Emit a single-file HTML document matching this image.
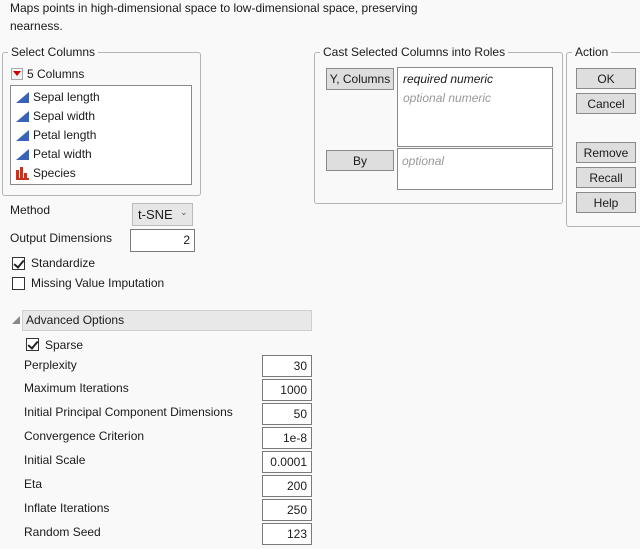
<!DOCTYPE html>
<html><head><style>
*{box-sizing:border-box;margin:0;padding:0}
body{width:640px;height:549px;background:#f9f9f9;font-family:"Liberation Sans",sans-serif;font-size:12px;color:#1a1a1a;position:relative;overflow:hidden}
.a{position:absolute;white-space:nowrap;line-height:14px}
.grp{position:absolute;border:1px solid #b4b4b4;border-radius:3px}
.gt{position:absolute;background:#f9f9f9;padding:0 3px;line-height:14px;top:-8px;left:5px}
.btn{position:absolute;background:#dedede;border:1px solid #8a8a8a;text-align:center;line-height:20px}
.box{position:absolute;background:#fff;border:1px solid #8a8a8a}
.inp{position:absolute;background:#fff;border:1px solid #7a7a7a;text-align:right;padding-right:4px;line-height:20px;height:22px}
.cb{position:absolute;width:13px;height:13px;border:1px solid #333;background:#fff}
.ck::after{content:"";position:absolute;left:3px;top:0px;width:4px;height:8px;border:solid #222;border-width:0 2px 2px 0;transform:rotate(40deg)}
.tri{position:absolute;width:0;height:0;border-left:13px solid transparent;border-bottom:11px solid #3a63b8}
.it{position:absolute;left:5px;line-height:14px}
.it .tri{left:0;top:2px}
.it span{position:absolute;left:17px;top:0}
.gray{color:#999;font-style:italic}
</style></head><body>
<div class="a" style="left:10px;top:1px">Maps points in high-dimensional space to low-dimensional space, preserving</div>
<div class="a" style="left:10px;top:19px">nearness.</div>

<div class="grp" style="left:2px;top:52px;width:199px;height:144px"><div class="gt">Select Columns</div></div>
<div style="position:absolute;left:11px;top:68px;width:12px;height:12px;border:1px solid #aaa;background:#f4f4f4"></div>
<div style="position:absolute;left:13px;top:71px;width:0;height:0;border-left:4px solid transparent;border-right:4px solid transparent;border-top:5px solid #c00"></div>
<div class="a" style="left:27px;top:67px">5 Columns</div>
<div class="box" style="left:10px;top:85px;width:182px;height:100px">
 <div class="it" style="top:4px;width:170px"><div class="tri"></div><span>Sepal length</span></div>
 <div class="it" style="top:23px;width:170px"><div class="tri"></div><span>Sepal width</span></div>
 <div class="it" style="top:42px;width:170px"><div class="tri"></div><span>Petal length</span></div>
 <div class="it" style="top:61px;width:170px"><div class="tri"></div><span>Petal width</span></div>
 <div class="it" style="top:80px;width:170px">
  <div style="position:absolute;left:0;top:4px;width:3px;height:9px;background:#c8321e"></div>
  <div style="position:absolute;left:4px;top:1px;width:3px;height:12px;background:#c8321e"></div>
  <div style="position:absolute;left:8px;top:7px;width:3px;height:6px;background:#c8321e"></div>
  <div style="position:absolute;left:0;top:12px;width:13px;height:2px;background:#c8321e"></div>
  <span>Species</span></div>
</div>

<div class="grp" style="left:314px;top:52px;width:249px;height:152px"><div class="gt">Cast Selected Columns into Roles</div></div>
<div class="btn" style="left:326px;top:68px;width:68px;height:22px">Y, Columns</div>
<div class="box" style="left:397px;top:67px;width:156px;height:80px">
 <div class="a" style="left:5px;top:4px;font-style:italic">required numeric</div>
 <div class="a gray" style="left:5px;top:23px">optional numeric</div>
</div>
<div class="btn" style="left:326px;top:150px;width:68px;height:21px">By</div>
<div class="box" style="left:397px;top:148px;width:156px;height:42px">
 <div class="a gray" style="left:4px;top:5px">optional</div>
</div>

<div class="grp" style="left:566px;top:52px;width:80px;height:175px"><div class="gt">Action</div></div>
<div class="btn" style="left:576px;top:68px;width:60px;height:21px">OK</div>
<div class="btn" style="left:576px;top:93px;width:60px;height:21px">Cancel</div>
<div class="btn" style="left:576px;top:142px;width:60px;height:21px">Remove</div>
<div class="btn" style="left:576px;top:167px;width:60px;height:21px">Recall</div>
<div class="btn" style="left:576px;top:192px;width:60px;height:21px">Help</div>

<div class="a" style="left:10px;top:203px">Method</div>
<div style="position:absolute;left:132px;top:203px;width:61px;height:23px;background:#e6e6e6;border:1px solid #bbb;line-height:21px;padding-left:5px;font-size:13px">t-SNE <span style="position:absolute;left:47px;top:-2px;font-size:9px;color:#555">&#8964;</span></div>
<div class="a" style="left:10px;top:231px">Output Dimensions</div>
<div class="inp" style="left:130px;top:229px;width:65px;height:23px">2</div>

<div class="cb ck" style="left:12px;top:257px"></div>
<div class="a" style="left:31px;top:256px">Standardize</div>
<div class="cb" style="left:12px;top:277px"></div>
<div class="a" style="left:31px;top:276px">Missing Value Imputation</div>

<div style="position:absolute;left:12px;top:316px;width:0;height:0;border-left:8px solid transparent;border-bottom:8px solid #888"></div>
<div style="position:absolute;left:22px;top:310px;width:290px;height:21px;background:#e8e8e8;border:1px solid #d0d0d0;line-height:19px;padding-left:3px">Advanced Options</div>

<div class="cb ck" style="left:26px;top:338px"></div>
<div class="a" style="left:45px;top:338px">Sparse</div>

<div class="a" style="left:24px;top:358px">Perplexity</div><div class="inp" style="left:262px;top:355px;width:50px">30</div>
<div class="a" style="left:24px;top:381px">Maximum Iterations</div><div class="inp" style="left:262px;top:379px;width:50px">1000</div>
<div class="a" style="left:24px;top:405px">Initial Principal Component Dimensions</div><div class="inp" style="left:262px;top:403px;width:50px">50</div>
<div class="a" style="left:24px;top:429px">Convergence Criterion</div><div class="inp" style="left:262px;top:427px;width:50px">1e-8</div>
<div class="a" style="left:24px;top:453px">Initial Scale</div><div class="inp" style="left:262px;top:451px;width:50px">0.0001</div>
<div class="a" style="left:24px;top:477px">Eta</div><div class="inp" style="left:262px;top:475px;width:50px">200</div>
<div class="a" style="left:24px;top:501px">Inflate Iterations</div><div class="inp" style="left:262px;top:499px;width:50px">250</div>
<div class="a" style="left:24px;top:525px">Random Seed</div><div class="inp" style="left:262px;top:523px;width:50px">123</div>
</body></html>
